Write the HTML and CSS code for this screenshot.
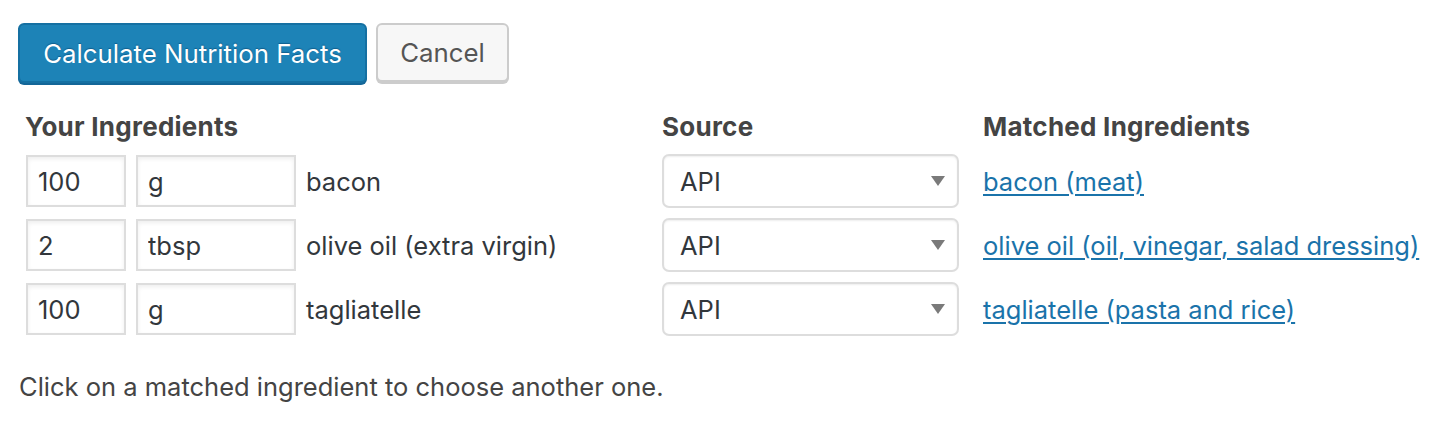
FILE: index.html
```html
<!DOCTYPE html>
<html>
<head>
<meta charset="utf-8">
<link rel="stylesheet" href="styles.css">
</head>
<body>
<div class="page">
  <div class="actions">
    <button class="btn btn-primary">Calculate Nutrition Facts</button>
    <button class="btn btn-secondary">Cancel</button>
  </div>
  <div class="ingredients">
    <div class="cell head">Your Ingredients</div>
    <div class="cell head">Source</div>
    <div class="cell head">Matched Ingredients</div>

    <div class="cell row-main">
      <input class="field qty" value="100">
      <input class="field unit" value="g">
      <span class="name">bacon</span>
    </div>
    <div class="cell">
      <div class="select"><span>API</span><span class="caret"></span></div>
    </div>
    <div class="cell"><a href="#" class="match">bacon (meat)</a></div>

    <div class="cell row-main">
      <input class="field qty" value="2">
      <input class="field unit" value="tbsp">
      <span class="name">olive oil (extra virgin)</span>
    </div>
    <div class="cell">
      <div class="select"><span>API</span><span class="caret"></span></div>
    </div>
    <div class="cell"><a href="#" class="match">olive oil (oil, vinegar, salad dressing)</a></div>

    <div class="cell row-main">
      <input class="field qty" value="100">
      <input class="field unit" value="g">
      <span class="name">tagliatelle</span>
    </div>
    <div class="cell">
      <div class="select"><span>API</span><span class="caret"></span></div>
    </div>
    <div class="cell"><a href="#" class="match">tagliatelle (pasta and rice)</a></div>
  </div>
  <p class="hint">Click on a matched ingredient to choose another one.</p>
</div>
</body>
</html>
```

FILE: styles.css
```css
html, body {
  margin: 0;
  padding: 0;
  background: #ffffff;
}
body {
  font-family: Inter, "Liberation Sans", Arial, sans-serif;
  font-size: 25.5px;
  color: #444444;
}
.page {
  padding: 23px 0 0 18px;
}
.actions {
  display: flex;
  gap: 9px;
}
.btn {
  font-family: Inter, "Liberation Sans", Arial, sans-serif;
  font-size: 25.8px;
  height: 60px;
  border-radius: 6px;
  padding: 0;
  cursor: pointer;
}
.btn-primary {
  background: #1d83b7;
  border: 2px solid #1570a2;
  box-shadow: 0 2px 0 #136698;
  color: #ffffff;
  text-shadow: 0 -1px 1px #10608f;
  width: 349px;
}
.btn-secondary {
  background: #f7f7f7;
  border: 2px solid #cccccc;
  box-shadow: 0 2px 0 #cccccc;
  color: #555555;
  width: 133px;
  height: 59px;
}
.ingredients {
  display: grid;
  grid-template-columns: 637px 321px auto;
  grid-auto-rows: 64px;
  grid-template-rows: 68px;
  margin-top: -2px;
  align-items: center;
}
.cell {
  padding: 0 7px;
  display: flex;
  align-items: center;
  gap: 10px;
}
.head {
  font-weight: bold;
  font-size: 26px;
  letter-spacing: 0.25px;
  align-self: end;
  padding-bottom: 7px;
}
.field {
  font-family: Inter, "Liberation Sans", Arial, sans-serif;
  font-size: 25.5px;
  color: #32373c;
  height: 52px;
  box-sizing: border-box;
  border: 2px solid #dddddd;
  box-shadow: inset 0 2px 4px rgba(0,0,0,0.07);
  padding: 0 10px;
  margin: 0;
  outline: none;
  background: #fff;
}
.qty { width: 100px; margin-left: 1px; }
.unit { width: 160px; }
.name { color: #32373c; }
.select {
  width: 297px;
  height: 54px;
  box-sizing: border-box;
  border: 2px solid #dddddd;
  border-radius: 7px;
  box-shadow: inset 0 1px 2px rgba(0,0,0,0.07);
  display: flex;
  align-items: center;
  justify-content: space-between;
  padding: 0 12px 0 16px;
  color: #32373c;
}
.caret {
  width: 0;
  height: 0;
  border-left: 7px solid transparent;
  border-right: 7px solid transparent;
  border-top: 10px solid #7a7a7a;
}
.match {
  color: #1a73aa;
  text-decoration: underline;
  text-decoration-thickness: 2px;
  text-underline-offset: 3px;
}
.hint {
  margin: 30px 0 0 1px;
  color: #444444;
}
```
